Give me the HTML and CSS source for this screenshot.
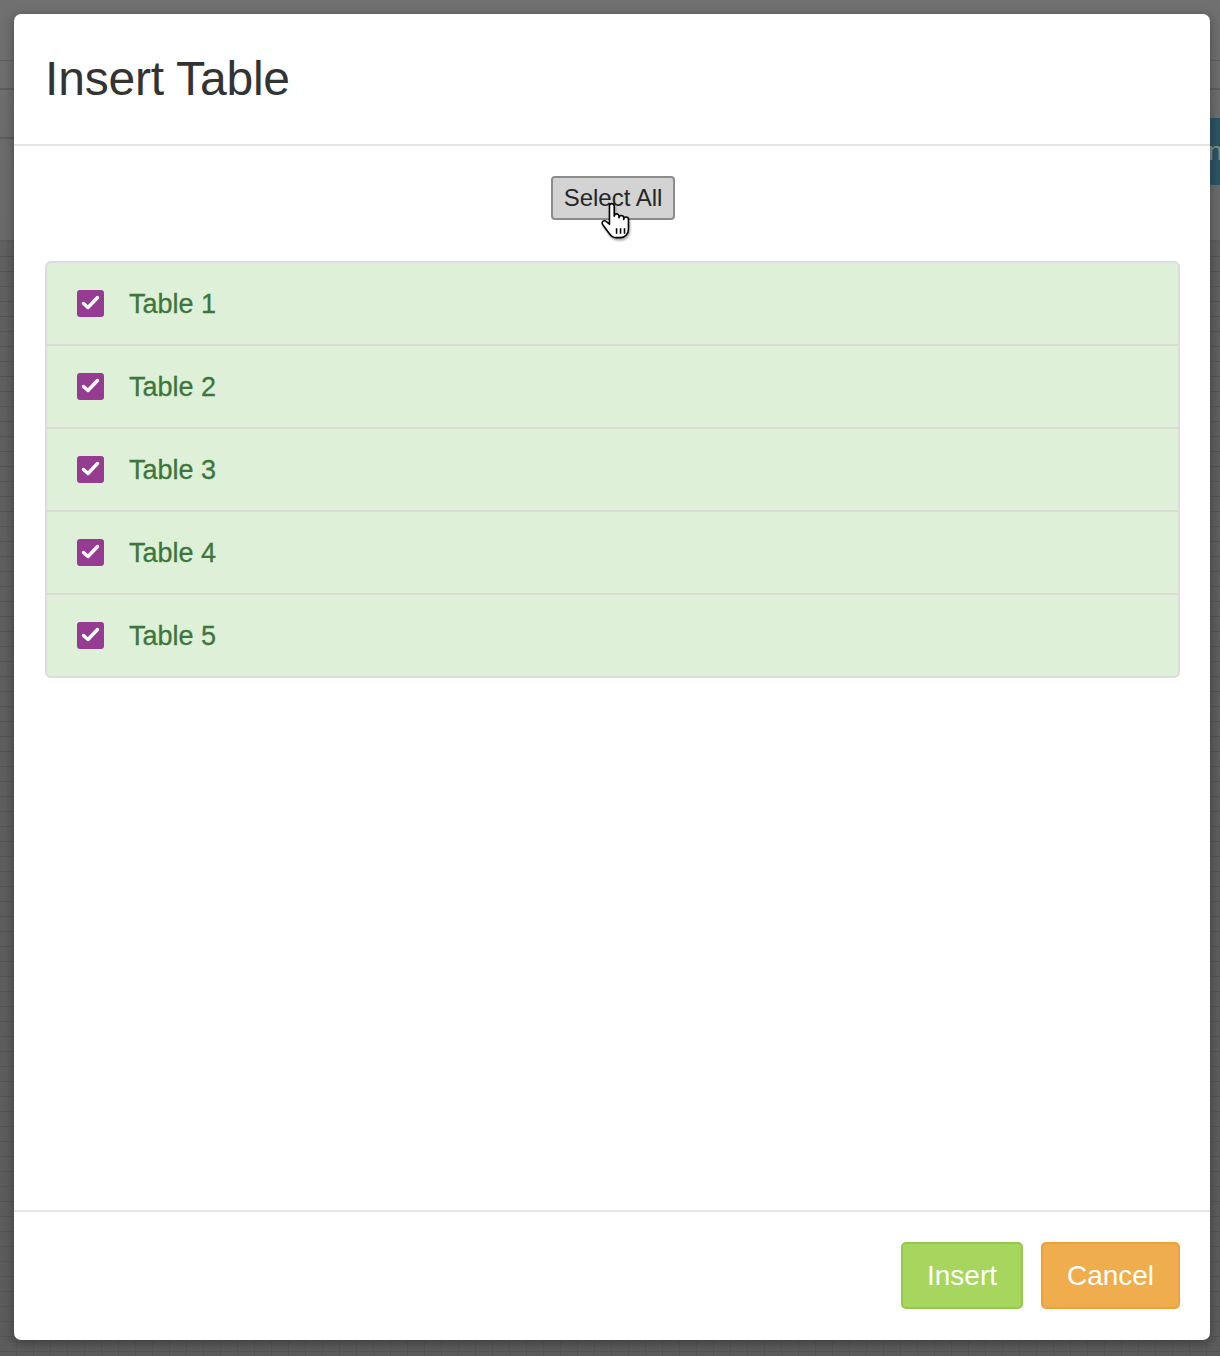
FILE: index.html
```html
<!DOCTYPE html>
<html lang="en">
<head>
<meta charset="utf-8">
<title>Insert Table</title>
<link rel="stylesheet" href="styles.css">
</head>
<body>
<div class="backdrop">
  <div class="bg-button">n</div>
</div>
<div class="stage">
  <div class="modal">
    <div class="modal-header">
      <h1 class="modal-title">Insert Table</h1>
    </div>
    <div class="modal-body">
      <div class="select-row">
        <button class="btn-select">Select All</button>
        <svg class="cursor" width="32" height="38" viewBox="0 0 20 24" aria-hidden="true">
          <path d="M6.5 14 V2.5 A1.5 1.5 0 0 1 9.5 2.5 V9 A1.5 1.5 0 0 1 12.5 9 V10 A1.5 1.5 0 0 1 15.5 10 V11 A1.5 1.5 0 0 1 18.5 11 V17 C18.5 20 16.5 22.5 13.5 22.5 H10.5 C8.5 22.5 7.5 21.5 6.5 20 L2.2 14.2 A1.5 1.5 0 0 1 4.6 12.4 Z" fill="#fff" stroke="#000" stroke-width="1" stroke-linejoin="round"/>
          <path d="M11 16.5 V20 M13.5 16.5 V20 M16 16.5 V20" stroke="#000" stroke-width="1"/>
        </svg>
      </div>
      <ul class="table-list">
        <li class="table-item"><span class="check"><svg width="19" height="16" viewBox="0 0 19 16"><path d="M2.5 8.5 L7 12.5 L16.5 2.5" fill="none" stroke="#fff" stroke-width="3.4" stroke-linecap="round" stroke-linejoin="round"/></svg></span><span class="label">Table 1</span></li>
        <li class="table-item"><span class="check"><svg width="19" height="16" viewBox="0 0 19 16"><path d="M2.5 8.5 L7 12.5 L16.5 2.5" fill="none" stroke="#fff" stroke-width="3.4" stroke-linecap="round" stroke-linejoin="round"/></svg></span><span class="label">Table 2</span></li>
        <li class="table-item"><span class="check"><svg width="19" height="16" viewBox="0 0 19 16"><path d="M2.5 8.5 L7 12.5 L16.5 2.5" fill="none" stroke="#fff" stroke-width="3.4" stroke-linecap="round" stroke-linejoin="round"/></svg></span><span class="label">Table 3</span></li>
        <li class="table-item"><span class="check"><svg width="19" height="16" viewBox="0 0 19 16"><path d="M2.5 8.5 L7 12.5 L16.5 2.5" fill="none" stroke="#fff" stroke-width="3.4" stroke-linecap="round" stroke-linejoin="round"/></svg></span><span class="label">Table 4</span></li>
        <li class="table-item"><span class="check"><svg width="19" height="16" viewBox="0 0 19 16"><path d="M2.5 8.5 L7 12.5 L16.5 2.5" fill="none" stroke="#fff" stroke-width="3.4" stroke-linecap="round" stroke-linejoin="round"/></svg></span><span class="label">Table 5</span></li>
      </ul>
    </div>
    <div class="modal-footer">
      <button class="btn btn-insert">Insert</button>
      <button class="btn btn-cancel">Cancel</button>
    </div>
  </div>
</div>
</body>
</html>
```
FILE: styles.css
```css
* { box-sizing: border-box; }
html, body { margin: 0; padding: 0; }
body {
  width: 1220px;
  height: 1356px;
  overflow: hidden;
  font-family: "Liberation Sans", Arial, Helvetica, sans-serif;
  background: #5e5e5e;
  position: relative;
}
.backdrop {
  position: absolute;
  inset: 0;
  background:
    linear-gradient(#5f5f5f 0 0) 0 60px / 100% 1px no-repeat,
    linear-gradient(#5e5e5e 0 0) 0 88px / 100% 2px no-repeat,
    linear-gradient(#5d5d5d 0 0) 0 137px / 100% 2px no-repeat,
    linear-gradient(#5c5c5c 0 0) 0 240px / 100% 2px no-repeat,
    repeating-linear-gradient(to bottom, transparent 0 14px, #555 14px 15px) 0 242px / 100% 1114px no-repeat,
    repeating-linear-gradient(to right, transparent 0 16px, #565656 16px 17px) 0 1340px / 100% 16px no-repeat,
    linear-gradient(#707070, #6a6a6a 240px, #606060 242px, #5c5c5c);
}
.bg-button {
  position: absolute;
  left: 1200px;
  top: 118px;
  width: 40px;
  height: 67px;
  background: #2c5461;
  color: #7d8d92;
  font-size: 26px;
  line-height: 67px;
  padding-left: 8px;
}
.stage {
  position: relative;
  padding: 14px 10px 16px 14px;
}
.modal {
  width: 1196px;
  height: 1326px;
  background: #fff;
  border-radius: 7px;
  display: flex;
  flex-direction: column;
  box-shadow: 0 3px 12px rgba(0,0,0,0.35);
}
.modal-header {
  height: 132px;
  padding: 0 31px;
  border-bottom: 2px solid #e5e5e5;
  display: flex;
  align-items: flex-start;
}
.modal-title {
  margin: 0;
  padding-top: 37px;
  font-size: 48px;
  font-weight: normal;
  line-height: 56px;
  color: #333;
  letter-spacing: -0.2px;
}
.modal-body {
  flex: 1;
  padding: 30px 30px 0 31px;
}
.select-row {
  display: flex;
  justify-content: center;
  position: relative;
  margin-bottom: 41px;
}
.btn-select {
  width: 124px;
  height: 44px;
  margin-left: 1px;
  background: #d3d3d3;
  border: 2px solid #8c8c8c;
  border-radius: 4px;
  font-family: "Liberation Sans", Arial, sans-serif;
  font-size: 24px;
  color: #262626;
  padding: 0;
  line-height: 38px;
}
.cursor {
  position: absolute;
  left: 554px;
  top: 26px;
  filter: drop-shadow(1px 2px 1px rgba(0,0,0,0.35));
}
.table-list {
  list-style: none;
  margin: 0;
  padding: 0;
  background: #dff0d8;
  border: 2px solid #dcdcdc;
  border-radius: 6px;
}
.table-item {
  height: 81px;
  display: flex;
  align-items: center;
  padding-left: 30px;
  color: #3c763d;
  font-size: 27px;
}
.table-item + .table-item {
  height: 83px;
  border-top: 2px solid #d8dcd4;
}
.check {
  width: 27px;
  height: 27px;
  border-radius: 3px;
  background: #953c92;
  display: flex;
  align-items: center;
  justify-content: center;
  margin-right: 25px;
  margin-top: -1px;
}
.label { line-height: 30px; -webkit-text-stroke: 0.3px #3c763d; }
.modal-footer {
  border-top: 2px solid #e5e5e5;
  padding: 30px 30px 31px 0;
  display: flex;
  justify-content: flex-end;
  gap: 18px;
}
.btn {
  height: 67px;
  border-radius: 5px;
  font-family: "Liberation Sans", Arial, sans-serif;
  font-size: 28px;
  color: #fff;
  padding: 0;
}
.btn-insert {
  width: 122px;
  background: #a6d65e;
  border: 2px solid #95c84c;
}
.btn-cancel {
  width: 139px;
  background: #f0ad4e;
  border: 2px solid #eda13a;
}
```
